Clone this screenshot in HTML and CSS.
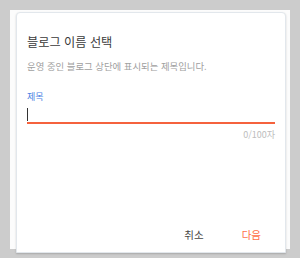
FILE: index.html
```html
<!DOCTYPE html>
<html lang="ko">
<head>
<meta charset="utf-8">
<link rel="stylesheet" href="styles.css">
</head>
<body>
<div class="panel">
  <div class="card">
    <h1 class="title">블로그 이름 선택</h1>
    <p class="desc">운영 중인 블로그 상단에 표시되는 제목입니다.</p>
    <label class="label">제목</label>
    <div class="field"><span class="caret"></span></div>
    <div class="counter">0/100자</div>
    <div class="actions">
      <button class="btn cancel">취소</button>
      <button class="btn next">다음</button>
    </div>
  </div>
</div>
</body>
</html>
```
FILE: styles.css
```css
html, body {
  margin: 0;
  padding: 0;
}
body {
  background: #cccccc;
  font-family: "Noto Sans CJK KR", "Noto Sans", sans-serif;
  width: 300px;
  height: 258px;
  overflow: hidden;
}
.panel {
  margin: 10px;
  width: 280px;
  height: 239px;
  box-sizing: border-box;
  background: #fcfcfc;
  padding: 2px 4px 0 6px;
}
.card {
  width: 270px;
  height: 241px;
  box-sizing: border-box;
  background: #fff;
  border: 1px solid #e2e7ec;
  border-radius: 4px 4px 0 0;
  box-shadow: 0 1px 2px rgba(0, 0, 0, 0.18);
  padding: 0 10px;
  display: flex;
  flex-direction: column;
}
.title {
  margin: 21px 0 0;
  font-size: 12.2px;
  line-height: 17px;
  font-weight: normal;
  color: #3a3a3a;
}
.desc {
  margin: 9px 0 0;
  font-size: 9.4px;
  line-height: 12px;
  color: #a0a0a0;
}
.label {
  margin-top: 19px;
  font-size: 9px;
  line-height: 12px;
  color: #4a7fe3;
}
.field {
  height: 19px;
  border-bottom: 2px solid #f5623d;
  display: flex;
  align-items: flex-start;
}
.caret {
  width: 1px;
  height: 13px;
  margin-top: 5px;
  background: #333;
}
.counter {
  margin-top: 5px;
  text-align: right;
  font-size: 9px;
  line-height: 12px;
  color: #bdbdbd;
}
.actions {
  margin-top: auto;
  margin-bottom: 10px;
  display: flex;
  justify-content: flex-end;
  gap: 38px;
  padding-right: 14px;
}
.btn {
  border: 0;
  background: none;
  padding: 0;
  font-family: inherit;
  font-size: 10.5px;
  line-height: 14px;
}
.cancel { color: #444; }
.next { color: #ff7048; }
```
